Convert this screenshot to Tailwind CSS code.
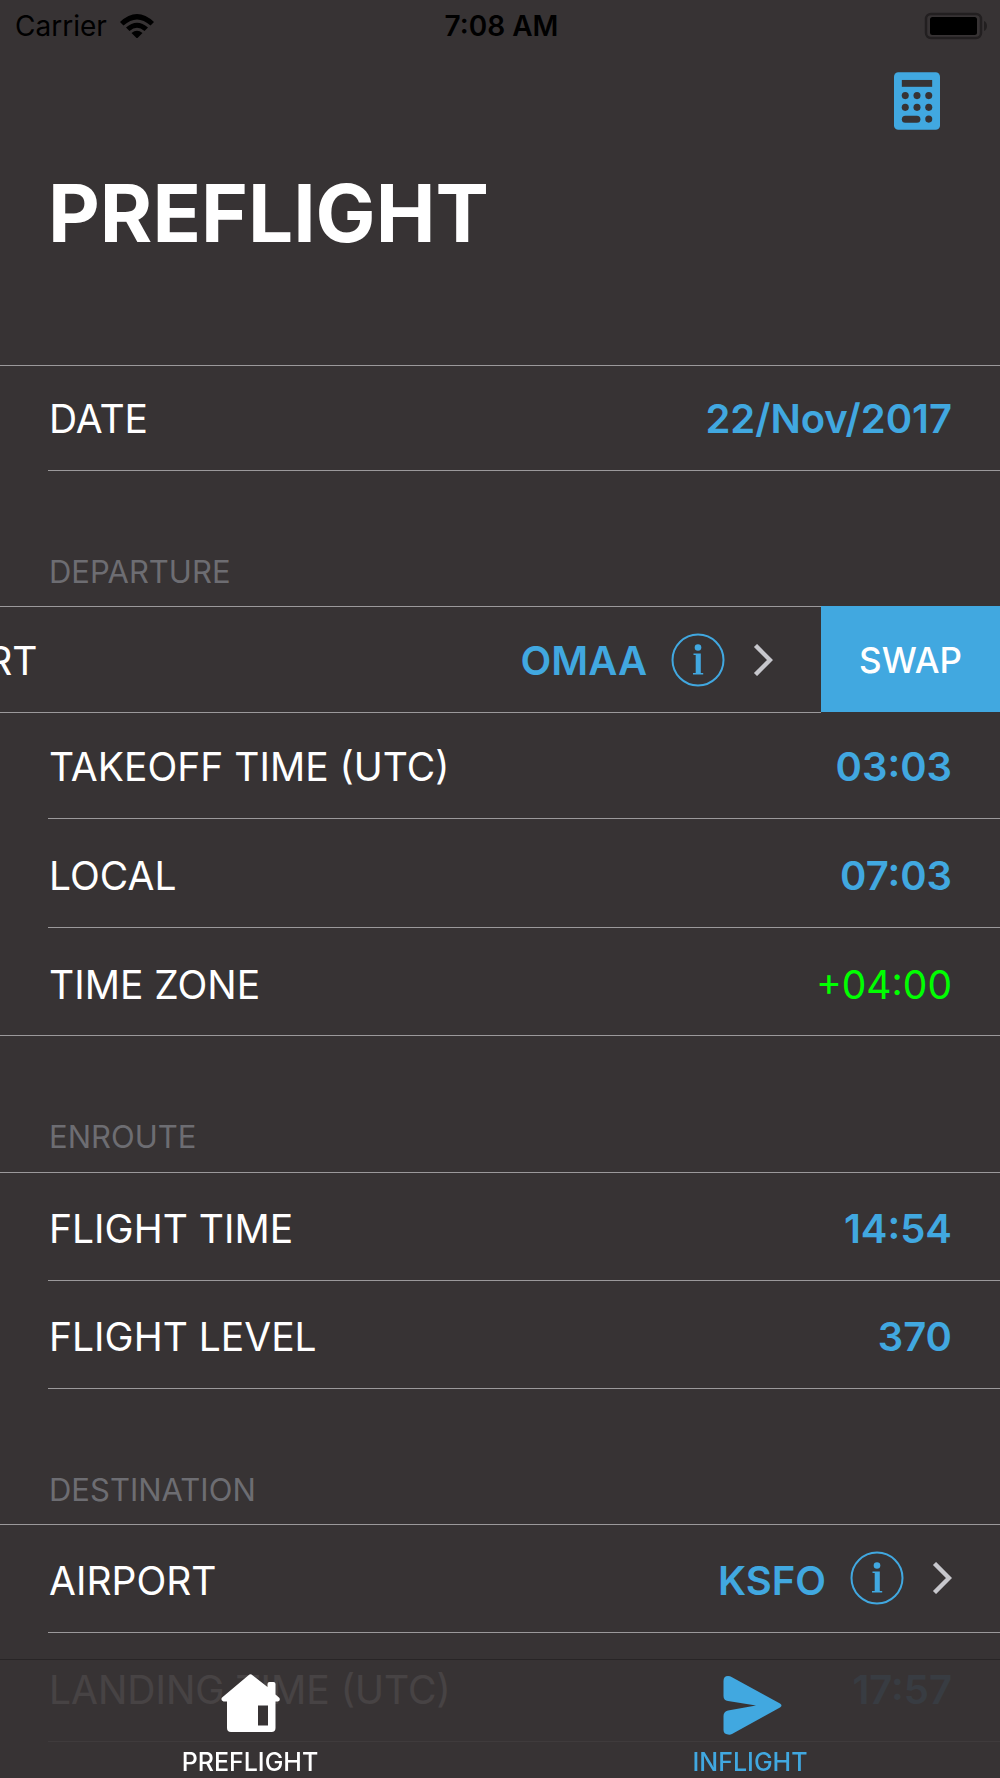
<!DOCTYPE html>
<html lang="en">
<head>
<meta charset="utf-8">
<meta name="viewport" content="width=device-width, initial-scale=1">
<title>Preflight</title>
<script src="https://cdn.jsdelivr.net/npm/@tailwindcss/browser@4"></script>
</head>
<body class="min-h-screen overflow-x-hidden bg-[#373334] font-['Inter','Liberation_Sans',sans-serif] text-[39px] leading-12 text-white">

<!-- Status bar -->
<header class="grid grid-cols-[1fr_auto_1fr] items-center pt-2 pr-3 pl-[15px] text-[28px] leading-9 text-black">
  <div class="flex items-center gap-3">
    <span>Carrier</span>
    <svg class="h-6 w-9" viewBox="0 0 36 24" aria-label="Wi-Fi">
      <path d="M1 8Q18-8 35 8L31.500 11.500Q18-.5 4.500 11.500z"/>
      <path d="M7 13.500Q18 4 29 13.500L25.500 17Q18 10.500 10.500 17z"/>
      <path d="M12.500 19Q18 14.500 23.500 19L18 24.500z"/>
    </svg>
  </div>
  <span class="text-center font-semibold">7:08 AM</span>
  <svg class="h-7 w-16 justify-self-end" viewBox="0 0 64 28" aria-label="Battery full">
    <rect x="2" y="2" width="55" height="24" rx="5" fill="none" stroke="#221f20" stroke-width="2.500"/>
    <rect x="6" y="5" width="47" height="18" rx="2.500" fill="#000"/>
    <path d="M60 9c4 1.500 4 8.500 0 10z" fill="#221f20"/>
  </svg>
</header>

<!-- Navigation bar -->
<div class="flex justify-end px-15 pt-7">
  <button type="button" aria-label="Calculator">
    <svg class="block h-[58px] w-[46px]" viewBox="0 0 47 59">
      <rect width="47" height="59" rx="4.500" fill="#41a8e0"/>
      <g fill="#373334">
        <path d="M8 8h31v7H8z"/>
        <circle cx="11.500" cy="24" r="3.600"/><circle cx="23.500" cy="24" r="3.600"/><circle cx="35.500" cy="24" r="3.600"/>
        <circle cx="11.500" cy="36" r="3.600"/><circle cx="23.500" cy="36" r="3.600"/><circle cx="35.500" cy="36" r="3.600"/>
        <rect x="8" y="44.500" width="19" height="7.200" rx="3.600"/><circle cx="35.500" cy="48" r="3.600"/>
      </g>
    </svg>
  </button>
</div>
<h1 class="px-12 pt-[35px] text-[80px] leading-24 font-bold">PREFLIGHT</h1>

<main class="pt-26">
  <ul class="border-t border-[#9b999b]">
    <li class="pl-12">
      <div class="flex h-[105px] items-center justify-between border-b border-[#9b999b] pt-0.5 pr-12">
        <span class="pl-px">DATE</span>
        <button type="button" class="text-[40px] font-semibold text-[#41a8e0]">22/Nov/2017</button>
      </div>
    </li>
  </ul>

  <h2 class="px-[49px] pt-[81px] pb-3.5 text-[31px] leading-10 text-[#6d6d72]">DEPARTURE</h2>
  <ul>
    <!-- Row swiped left, with its action showing -->
    <li class="flex overflow-hidden">
      <div class="-ml-[179px] flex h-[107px] w-full shrink-0 items-center border-y border-[#9b999b] px-12">
        <span class="grow pt-0.5 pl-px">AIRPORT</span>
        <span class="mr-6 pt-0.5 text-[40px] font-semibold text-[#41a8e0]">OMAA</span>
        <button type="button" aria-label="Airport information" class="mr-7">
          <svg class="block size-[54px]" viewBox="0 0 54 54"><circle cx="27" cy="27" r="25.500" fill="none" stroke="#41a8e0" stroke-width="2"/><circle cx="27" cy="14.500" r="3.300" fill="#41a8e0"/><path d="M22.500 20.500h7.300V40h2.400v1.500H22V40h2.700V22h-2.200z" fill="#41a8e0"/></svg>
        </button>
        <svg class="h-8 w-5" viewBox="0 0 20 32" fill="none" aria-hidden="true"><path d="M2.500 1.500 17 16 2.500 30.500" stroke="#c7c7cc" stroke-width="4.400"/></svg>
      </div>
      <button type="button" class="h-[106px] w-[179px] shrink-0 bg-[#41a8e0] pt-0.5 text-[35px] font-medium">SWAP</button>
    </li>
    <li class="pl-12">
      <div class="flex h-[106px] items-center justify-between border-b border-[#9b999b] pt-0.5 pr-12">
        <span class="pl-px">TAKEOFF TIME (UTC)</span>
        <button type="button" class="text-[40px] font-semibold text-[#41a8e0]">03:03</button>
      </div>
    </li>
    <li class="pl-12">
      <div class="flex h-[109px] items-center justify-between border-b border-[#9b999b] pt-1.5 pr-12">
        <span class="pl-px">LOCAL</span>
        <button type="button" class="text-[40px] font-semibold text-[#41a8e0]">07:03</button>
      </div>
    </li>
    <li class="flex h-[108px] items-center justify-between border-b border-[#9b999b] px-12 pt-1.5">
      <span class="pl-px">TIME ZONE</span>
      <span class="text-[#00ff00]">+04:00</span>
    </li>
  </ul>

  <h2 class="px-[49px] pt-[81px] pb-[15px] text-[31px] leading-10 text-[#6d6d72]">ENROUTE</h2>
  <ul class="border-t border-[#9b999b]">
    <li class="pl-12">
      <div class="flex h-[108px] items-center justify-between border-b border-[#9b999b] pt-1 pr-12">
        <span class="pl-px">FLIGHT TIME</span>
        <button type="button" class="text-[40px] font-semibold text-[#41a8e0]">14:54</button>
      </div>
    </li>
    <li class="pl-12">
      <div class="flex h-[108px] items-center justify-between border-b border-[#9b999b] pt-1 pr-12">
        <span class="pl-px">FLIGHT LEVEL</span>
        <button type="button" class="text-[40px] font-semibold text-[#41a8e0]">370</button>
      </div>
    </li>
  </ul>

  <h2 class="px-[49px] pt-[81px] pb-3.5 text-[31px] leading-10 text-[#6d6d72]">DESTINATION</h2>
  <ul class="border-t border-[#9b999b]">
    <li class="pl-12">
      <div class="flex h-[108px] items-center border-b border-[#9b999b] pr-12 pb-0.5">
        <span class="grow pt-1.5 pl-px">AIRPORT</span>
        <span class="mr-6 pt-1.5 text-[40px] font-semibold text-[#41a8e0]">KSFO</span>
        <button type="button" aria-label="Airport information" class="mr-7">
          <svg class="block size-[54px]" viewBox="0 0 54 54"><circle cx="27" cy="27" r="25.500" fill="none" stroke="#41a8e0" stroke-width="2"/><circle cx="27" cy="14.500" r="3.300" fill="#41a8e0"/><path d="M22.500 20.500h7.300V40h2.400v1.500H22V40h2.700V22h-2.200z" fill="#41a8e0"/></svg>
        </button>
        <svg class="h-8 w-5" viewBox="0 0 20 32" fill="none" aria-hidden="true"><path d="M2.500 1.500 17 16 2.500 30.500" stroke="#c7c7cc" stroke-width="4.400"/></svg>
      </div>
    </li>
    <li class="pl-12">
      <div class="flex h-[109px] items-center justify-between border-b border-[#9b999b] pt-1.5 pr-12">
        <span class="pl-px">LANDING TIME (UTC)</span>
        <button type="button" class="text-[40px] font-semibold text-[#41a8e0]">17:57</button>
      </div>
    </li>
  </ul>
</main>

<!-- Tab bar -->
<nav class="fixed inset-x-0 bottom-0 grid grid-cols-2 border-t border-[#282526] bg-[#373334]/92 text-[25px] leading-8 font-medium">
  <a href="#preflight" class="flex flex-col items-center gap-[13px] pt-3.5" aria-current="page">
    <svg class="size-[59px]" viewBox="0 0 59 59" aria-hidden="true">
      <path d="M27.500 1.200q2-1.700 4 0L46.500 13V10q0-2 2-2h4q2 0 2 2v10.500l4 3.500q1 3-1.500 3.500H54.500V54q0 4-4 4H10q-4 0-4-4V27.500H2.500Q-.500 26.500.800 23.700zM37 31.500V51.500H47V31.500z" fill="#fff" fill-rule="evenodd"/>
    </svg>
    <span>PREFLIGHT</span>
  </a>
  <a href="#inflight" class="flex flex-col items-center gap-[13px] pt-3.5 text-[#41a8e0]">
    <svg class="size-[59px] overflow-visible" viewBox="-2 -1 59 59" aria-hidden="true">
      <path d="M.500 6Q.500 1 5 1Q7 1 9 2.200L57 28.500Q60 30.500 57 32.500L9 59Q7 60 5 59.500Q.500 59 .500 55V41Q.500 36.500 5 35.500L33 30.500 5 26Q.500 25.500 .500 21z" fill="#41a8e0"/>
    </svg>
    <span>INFLIGHT</span>
  </a>
</nav>
</body>
</html>
